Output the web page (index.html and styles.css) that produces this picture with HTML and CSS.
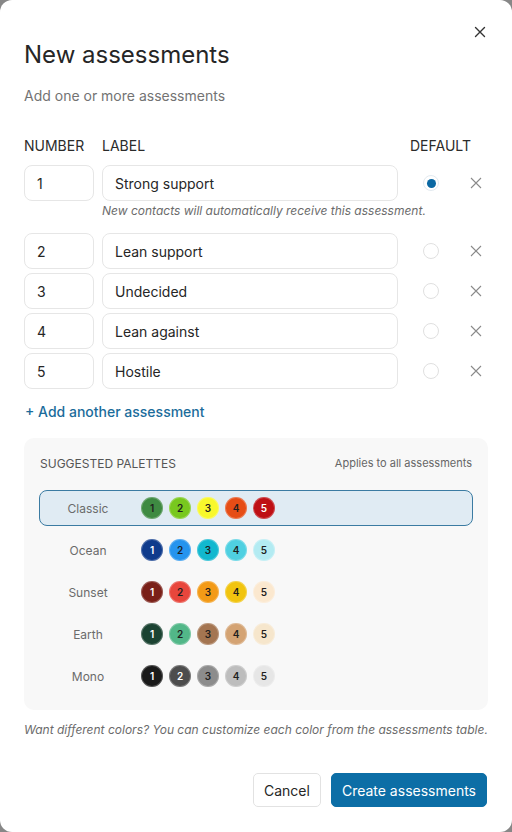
FILE: index.html
```html
<!DOCTYPE html>
<html>
<head>
<meta charset="utf-8">
<link rel="stylesheet" href="styles.css">
</head>
<body>
<div class="modal">
  <button class="close" aria-label="Close">
    <svg width="12" height="12" viewBox="0 0 12 12"><path d="M1.5 1.5l9 9M10.5 1.5l-9 9" stroke="#333" stroke-width="1.4" stroke-linecap="round"/></svg>
  </button>
  <h1 class="title">New assessments</h1>
  <p class="subtitle">Add one or more assessments</p>

  <div class="grid head">
    <div>NUMBER</div>
    <div>LABEL</div>
    <div class="head-default">DEFAULT</div>
  </div>

  <div class="grid row">
    <div class="field num">1</div>
    <div class="field">Strong support</div>
    <div class="actions"><span class="radio-cell"><span class="radio on"></span></span><span class="x"><svg width="12" height="12" viewBox="0 0 12 12"><path d="M1 1l10 10M11 1L1 11" stroke="#8a8a8a" stroke-width="1.1"/></svg></span></div>
  </div>
  <p class="helper">New contacts will automatically receive this assessment.</p>

  <div class="rows">
    <div class="grid row">
      <div class="field num">2</div>
      <div class="field">Lean support</div>
      <div class="actions"><span class="radio-cell"><span class="radio"></span></span><span class="x"><svg width="12" height="12" viewBox="0 0 12 12"><path d="M1 1l10 10M11 1L1 11" stroke="#8a8a8a" stroke-width="1.1"/></svg></span></div>
    </div>
    <div class="grid row">
      <div class="field num">3</div>
      <div class="field">Undecided</div>
      <div class="actions"><span class="radio-cell"><span class="radio"></span></span><span class="x"><svg width="12" height="12" viewBox="0 0 12 12"><path d="M1 1l10 10M11 1L1 11" stroke="#8a8a8a" stroke-width="1.1"/></svg></span></div>
    </div>
    <div class="grid row">
      <div class="field num">4</div>
      <div class="field">Lean against</div>
      <div class="actions"><span class="radio-cell"><span class="radio"></span></span><span class="x"><svg width="12" height="12" viewBox="0 0 12 12"><path d="M1 1l10 10M11 1L1 11" stroke="#8a8a8a" stroke-width="1.1"/></svg></span></div>
    </div>
    <div class="grid row">
      <div class="field num">5</div>
      <div class="field">Hostile</div>
      <div class="actions"><span class="radio-cell"><span class="radio"></span></span><span class="x"><svg width="12" height="12" viewBox="0 0 12 12"><path d="M1 1l10 10M11 1L1 11" stroke="#8a8a8a" stroke-width="1.1"/></svg></span></div>
    </div>
  </div>

  <a class="add" href="#">+ Add another assessment</a>

  <div class="palettes">
    <div class="pal-head">
      <span class="pal-title">SUGGESTED PALETTES</span>
      <span class="pal-note">Applies to all assessments</span>
    </div>
    <div class="pal-list">
      <div class="pal selected">
        <span class="pal-name">Classic</span>
        <span class="dots">
          <span class="dot dk" style="background:#3e8a42">1</span>
          <span class="dot dk" style="background:#78c81e">2</span>
          <span class="dot dk" style="background:#f8f82c">3</span>
          <span class="dot dk" style="background:#e64d16">4</span>
          <span class="dot lt" style="background:#be0f14">5</span>
        </span>
      </div>
      <div class="pal">
        <span class="pal-name">Ocean</span>
        <span class="dots">
          <span class="dot lt" style="background:#0f3b8c">1</span>
          <span class="dot dk" style="background:#2694ee">2</span>
          <span class="dot dk" style="background:#12b8cf">3</span>
          <span class="dot dk" style="background:#4fd0e1">4</span>
          <span class="dot dk" style="background:#b3ebf2">5</span>
        </span>
      </div>
      <div class="pal">
        <span class="pal-name">Sunset</span>
        <span class="dots">
          <span class="dot lt" style="background:#7a2018">1</span>
          <span class="dot dk" style="background:#e8463c">2</span>
          <span class="dot dk" style="background:#f39a16">3</span>
          <span class="dot dk" style="background:#f1c40f">4</span>
          <span class="dot dk" style="background:#fbe8cf">5</span>
        </span>
      </div>
      <div class="pal">
        <span class="pal-name">Earth</span>
        <span class="dots">
          <span class="dot lt" style="background:#1b4332">1</span>
          <span class="dot dk" style="background:#52b788">2</span>
          <span class="dot dk" style="background:#a47551">3</span>
          <span class="dot dk" style="background:#d4a373">4</span>
          <span class="dot dk" style="background:#f6e6cc">5</span>
        </span>
      </div>
      <div class="pal">
        <span class="pal-name">Mono</span>
        <span class="dots">
          <span class="dot lt" style="background:#1a1a1a">1</span>
          <span class="dot lt" style="background:#4d4d4d">2</span>
          <span class="dot dk" style="background:#8c8c8c">3</span>
          <span class="dot dk" style="background:#bdbdbd">4</span>
          <span class="dot dk" style="background:#e6e6e6">5</span>
        </span>
      </div>
    </div>
  </div>

  <p class="note">Want different colors? You can customize each color from the assessments table.</p>

  <div class="footer">
    <button class="btn cancel">Cancel</button>
    <button class="btn primary">Create assessments</button>
  </div>
</div>
</body>
</html>
```

FILE: styles.css
```css
* { box-sizing: border-box; }
html, body { margin: 0; padding: 0; }
body {
  background: #878787;
  font-family: Inter, "Noto Sans", "Liberation Sans", sans-serif;
  color: #222;
}
.modal {
  position: relative;
  width: 512px;
  height: 832px;
  background: #fff;
  border-radius: 12px;
  padding: 40px 24px 0 24px;
  overflow: hidden;
}
.close {
  position: absolute;
  top: 26px;
  right: 26px;
  width: 12px;
  height: 12px;
  padding: 0;
  border: 0;
  background: none;
  display: flex;
}
.title {
  margin: 0;
  font-size: 24px;
  line-height: 30px;
  font-weight: 400;
  color: #262626;
}
.subtitle {
  margin: 16px 0 0 0;
  font-size: 14px;
  line-height: 20px;
  color: #737373;
}
.grid {
  display: grid;
  grid-template-columns: 70px 296px 82px;
  column-gap: 8px;
}
.head {
  margin-top: 30px;
  font-size: 14px;
  line-height: 20px;
  color: #2b2b2b;
}
.head-default { padding-left: 4px; }
.row { margin-top: 9px; height: 36px; }
.rows { display: flex; flex-direction: column; gap: 4px; margin-top: 14px; }
.rows .row { margin-top: 0; }
.field {
  height: 36px;
  border: 1px solid #e6e6e6;
  border-radius: 8px;
  padding: 0 12px;
  display: flex;
  align-items: center;
  font-size: 14px;
  color: #262626;
}
.actions { display: flex; align-items: center; }
.radio-cell { width: 50px; display: flex; justify-content: center; }
.radio {
  width: 16px;
  height: 16px;
  border-radius: 50%;
  border: 1.5px solid #e0e0e0;
  display: flex;
  align-items: center;
  justify-content: center;
}
.radio.on { border: 1.5px solid #e3eaf0; }
.radio.on::after {
  content: "";
  width: 9px;
  height: 9px;
  border-radius: 50%;
  background: #0b68a3;
}
.x { width: 24px; margin-left: 8px; display: flex; justify-content: center; }
.helper {
  margin: 2px 0 0 78px;
  font-size: 12px;
  line-height: 16px;
  font-style: italic;
  color: #6b6b6b;
}
.add {
  display: block;
  margin-top: 13px;
  padding-left: 1px;
  font-size: 14px;
  line-height: 20px;
  font-weight: 500;
  color: #1b6c9b;
  text-decoration: none;
}
.palettes {
  margin-top: 16px;
  background: #f8f8f8;
  border-radius: 10px;
  padding: 16px 15px;
}
.pal-head {
  display: flex;
  justify-content: space-between;
  align-items: center;
  padding: 0 1px;
  height: 18px;
}
.pal-title { font-size: 12px; color: #555; }
.pal-note { font-size: 11px; color: #666; }
.pal-list { display: flex; flex-direction: column; gap: 6px; margin-top: 18px; }
.pal {
  height: 36px;
  display: flex;
  align-items: center;
  border: 1px solid transparent;
  border-radius: 8px;
}
.pal.selected { background: #e0ebf3; border-color: #3b7ba2; }
.pal-name { width: 96px; text-align: center; font-size: 12px; color: #6b6b6b; }
.dots { display: flex; gap: 6px; margin-left: 5px; }
.dot {
  width: 22px;
  height: 22px;
  border-radius: 50%;
  display: flex;
  align-items: center;
  justify-content: center;
  font-size: 10px;
  font-weight: 600;
  box-shadow: inset 0 0 0 1px rgba(255,255,255,0.25);
}
.dot.dk { color: #1f1f1f; }
.dot.lt { color: #fff; }
.note {
  margin: 12px 0 0 0;
  font-size: 12px;
  line-height: 16px;
  font-style: italic;
  color: #6b6b6b;
}
.footer {
  margin-top: 35px;
  display: flex;
  justify-content: flex-end;
  gap: 10px;
  padding-right: 1px;
}
.btn {
  height: 34px;
  font-family: Inter, "Noto Sans", "Liberation Sans", sans-serif;
  font-size: 14px;
  font-weight: 400;
  border-radius: 5px;
  padding: 0 10px;
  white-space: nowrap;
  cursor: pointer;
}
.cancel { background: #fff; border: 1px solid #e2e2e2; color: #262626; }
.primary { background: #0c6ea6; border: 1px solid #0c6ea6; color: #fff; }
```
